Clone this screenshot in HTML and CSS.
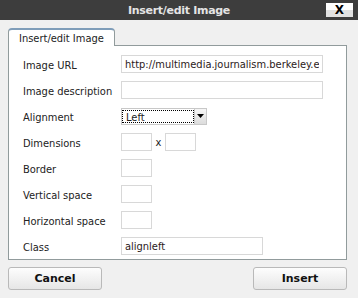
FILE: index.html
```html
<!DOCTYPE html>
<html lang="en">
<head>
  <meta charset="UTF-8" />
  <title>Insert/edit Image</title>
  <link rel="stylesheet" href="styles.css">
</head>
<body>
  <div class="dialog">
    <!-- Title bar -->
    <div class="titlebar">
      <span class="title">Insert/edit Image</span>
      <button class="close">X</button>
    </div>

    <div class="content">
      <!-- Tabs -->
      <div class="tabs">
        <span class="tab active">Insert/edit Image</span>
      </div>

      <!-- Form panel -->
      <div class="panel">
        <div class="row">
          <label for="src">Image URL</label>
          <input type="text" id="src" class="wide" value="http://multimedia.journalism.berkeley.edu/media/upload/tutorials">
        </div>
        <div class="row">
          <label for="alt">Image description</label>
          <input type="text" id="alt" class="wide">
        </div>
        <div class="row">
          <label for="align">Alignment</label>
          <div class="select">
            <span class="select-value">Left</span>
            <span class="select-arrow"><svg width="7" height="4" viewBox="0 0 7 4"><path d="M0 0h7L3.5 4z" fill="#000"/></svg></span>
          </div>
        </div>
        <div class="row">
          <label for="width">Dimensions</label>
          <div class="dims">
            <input type="text" id="width" class="small">
            <span class="times">x</span>
            <input type="text" id="height" class="small">
          </div>
        </div>
        <div class="row">
          <label for="border">Border</label>
          <input type="text" id="border" class="small">
        </div>
        <div class="row">
          <label for="vspace">Vertical space</label>
          <input type="text" id="vspace" class="small">
        </div>
        <div class="row">
          <label for="hspace">Horizontal space</label>
          <input type="text" id="hspace" class="small">
        </div>
        <div class="row">
          <label for="class">Class</label>
          <input type="text" id="class" class="medium" value="alignleft">
        </div>
      </div>

      <!-- Buttons -->
      <div class="actions">
        <button class="btn">Cancel</button>
        <button class="btn">Insert</button>
      </div>
    </div>
  </div>
</body>
</html>
```

FILE: styles.css
```css
/* BASE */
* {
  margin: 0;
  padding: 0;
  box-sizing: border-box;
}
body {
  font-family: "DejaVu Sans Condensed", "DejaVu Sans", sans-serif;
  font-size: 11px;
  color: #222;
  background: #f0f0f0;
}
.dialog {
  width: 358px;
  height: 298px;
  background: #f0f0f0;
}
/* TITLE BAR */
.titlebar {
  display: grid;
  grid-template-columns: 1fr auto 1fr;
  align-items: center;
  height: 20px;
  background: #3d3d3d;
}
.title {
  grid-column: 2;
  font-family: "DejaVu Sans", sans-serif;
  font-size: 11px;
  font-weight: bold;
  color: #e4e4e4;
  letter-spacing: -0.3px;
}
.close {
  grid-column: 3;
  justify-self: end;
  margin-right: 5px;
  width: 27px;
  height: 14px;
  border: none;
  background: linear-gradient(#fff 0%, #fff 50%, #e1e1e1 50%, #e1e1e1 100%);
  font-family: "DejaVu Sans", sans-serif;
  font-weight: bold;
  font-size: 12px;
  line-height: 14px;
  color: #000;
}
/* CONTENT */
.content {
  padding: 8px 11px 0 8px;
}
.tabs {
  display: flex;
  margin-bottom: -1px;
  position: relative;
}
.tab {
  display: inline-block;
  width: 107px;
  height: 18px;
  padding: 2px 0 0 10px;
  background: #fff;
  border: 1px solid #919b9c;
  border-bottom: none;
  border-top: 2px solid #7f9db9;
  border-radius: 4px 4px 0 0;
  color: #222;
}
.panel {
  height: 215px;
  padding: 5px 0 0 14px;
  background: #fff;
  border: 1px solid #919b9c;
}
.row {
  display: grid;
  grid-template-columns: 98px 1fr;
  align-items: center;
  height: 26px;
}
.row label {
  padding-top: 2px;
}
input {
  height: 18px;
  border: 1px solid #d8d8d8;
  font-family: inherit;
  font-size: 11px;
  color: #2b1a1a;
  padding: 0 3px;
  background: #fff;
  outline: none;
}
.wide {
  width: 202px;
}
.medium {
  width: 142px;
}
.small {
  width: 31px;
}
.dims {
  display: flex;
  align-items: center;
}
.times {
  width: 13px;
  text-align: center;
  color: #222;
}
/* SELECT */
.select {
  display: flex;
  width: 86px;
  height: 17px;
  border: 1px solid #c8c8c8;
  background: #fff;
}
.select-value {
  flex: 1;
  padding-left: 3px;
  line-height: 13px;
  border: 1px dotted #000;
  margin: 1px 0 1px 0;
}
.select-arrow {
  display: flex;
  align-items: center;
  justify-content: center;
  width: 12px;
  background: linear-gradient(#f6f6f6, #dcdcdc);
  border-left: 1px solid #c8c8c8;
}
/* BUTTONS */
.actions {
  display: flex;
  justify-content: space-between;
  margin-top: 7px;
  padding-right: 0;
}
.btn {
  width: 94px;
  height: 23px;
  border: 1px solid #b9b9b9;
  border-radius: 3px;
  background: linear-gradient(#fdfdfd, #e6e6e6);
  font-family: "DejaVu Sans", sans-serif;
  font-size: 11px;
  font-weight: bold;
  color: #111;
}
```
